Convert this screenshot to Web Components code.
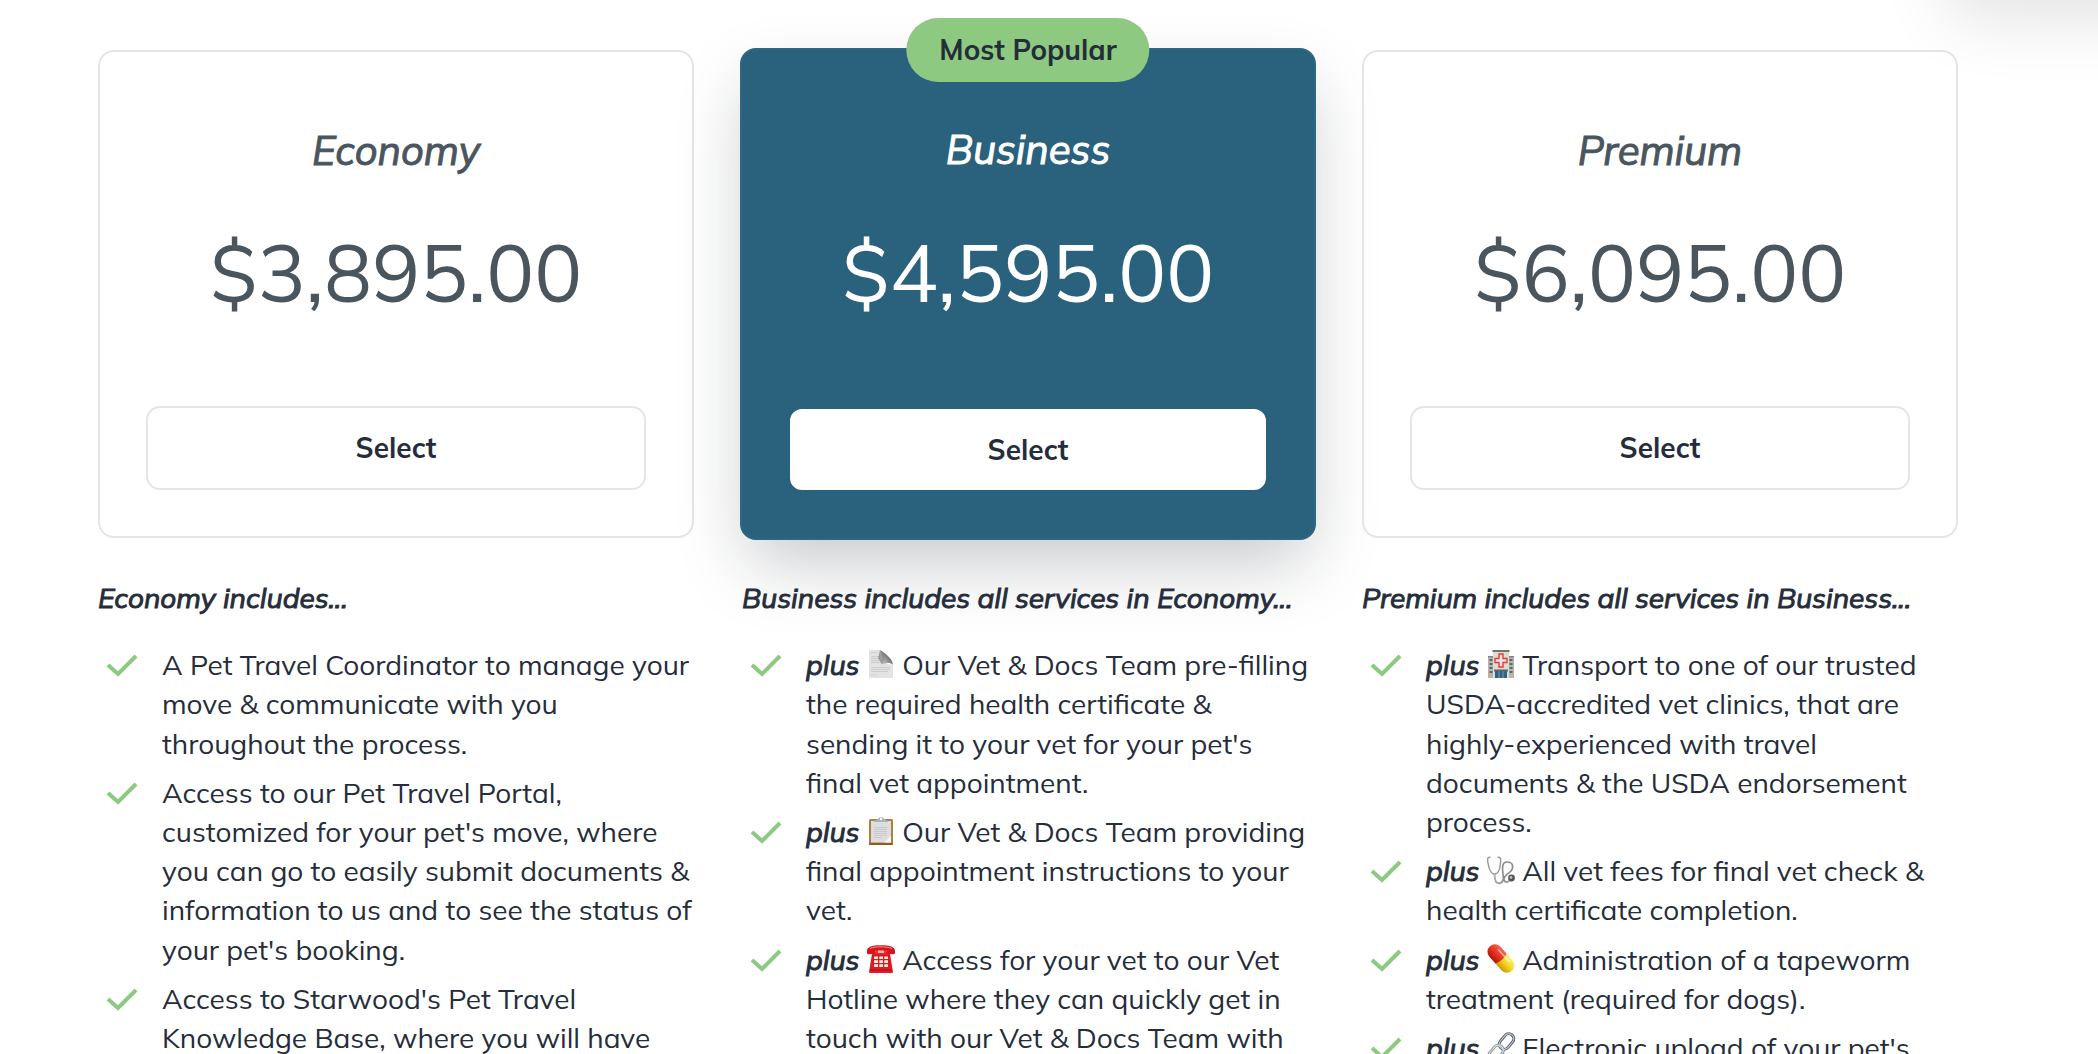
<!DOCTYPE html>
<html lang="en">
<head>
<meta charset="utf-8">
<title>Pet travel plans</title>
<style>
  html { overflow: hidden; }
  body { margin: 0; height: 100vh; overflow: hidden; background: #fff; color: #252d3b; font: 28px/1.4 Mulish, Lato, sans-serif; }
</style>
</head>
<body>
<plan-table>
  <plan-column name="Economy" price="$3,895.00">
    <span slot="lead">Economy includes...</span>
    <plan-feature>A Pet Travel Coordinator to manage your move &amp; communicate with you throughout the process.</plan-feature>
    <plan-feature>Access to our Pet Travel Portal, customized for your pet's move, where you can go to easily submit documents &amp; information to us and to see the status of your pet's booking.</plan-feature>
    <plan-feature>Access to Starwood's Pet Travel Knowledge Base, where you will have</plan-feature>
  </plan-column>
  <plan-column name="Business" price="$4,595.00" badge="Most Popular" featured>
    <span slot="lead">Business includes all services in Economy...</span>
    <plan-feature plus icon="page">Our Vet &amp; Docs Team pre-filling the required health certificate &amp; sending it to your vet for your pet's final vet appointment.</plan-feature>
    <plan-feature plus icon="clipboard">Our Vet &amp; Docs Team providing final appointment instructions to your vet.</plan-feature>
    <plan-feature plus icon="phone">Access for your vet to our Vet Hotline where they can quickly get in touch with our Vet &amp; Docs Team with</plan-feature>
  </plan-column>
  <plan-column name="Premium" price="$6,095.00">
    <span slot="lead">Premium includes all services in Business...</span>
    <plan-feature plus icon="hospital">Transport to one of our trusted USDA-accredited vet clinics, that are highly-experienced with travel documents &amp; the USDA endorsement process.</plan-feature>
    <plan-feature plus icon="stethoscope">All vet fees for final vet check &amp; health certificate completion.</plan-feature>
    <plan-feature plus icon="pill">Administration of a tapeworm treatment (required for dogs).</plan-feature>
    <plan-feature plus icon="link">Electronic upload of your pet's</plan-feature>
  </plan-column>
</plan-table>
<corner-panel></corner-panel>
<script>
const ICONS = {
  page: `<defs><linearGradient id="g" x1="0" y1="1" x2="1" y2="0"><stop offset="0" stop-color="#ddd"/><stop offset=".4" stop-color="#999"/><stop offset="1" stop-color="#222"/></linearGradient></defs>
    <path d="M2 0H14C16 4 17 9 18 13L26 15V28H2Z" fill="#e3e3e3"/>
    <path d="M4 2.500H10M4 6.500H13M4 8.500H13M4 10.500H14M4 12.500H14M4 17.500H23M4 19.500H23M4 21.500H21M4 25H10" stroke="#cdcdcd" stroke-width="1"/>
    <path d="M13 0C18 3 26 9 26 15C23 12 19 13 15 14.500C17 9 16 4 13 0Z" fill="url(#g)"/><path d="M13 0C17 4 18 9 15 14.500L11 8Z" fill="#666" opacity=".55"/>`,
  clipboard: `<rect x="2" y="2" width="24" height="26" rx="1.500" fill="#b07f3c"/><rect x="2" y="26" width="24" height="2" rx="1" fill="#8a5c28"/><rect x="4" y="4" width="20" height="21.500" fill="#dedede"/><path d="M17 25.500L24 19V25.500Z" fill="#f6f6f6"/>
    <path d="M7 10.500H20M7 12.500H20M7 14.500H20M7 16.500H20M7 18.500H20M7 20.500H15" stroke="#cacacd" stroke-width="1"/><path d="M7 5C7 3 10 3 11 2C11.500 -.5 16.500 -.5 17 2C18 3 21 3 21 5Z" fill="#a9b4c0"/><circle cx="14" cy="2" r="1.200" fill="#fff"/>`,
  phone: `<defs><linearGradient id="g" x1="0" y1="0" x2="0" y2="1"><stop offset="0" stop-color="#f0524c"/><stop offset=".3" stop-color="#d8141a"/><stop offset="1" stop-color="#e32024"/></linearGradient></defs>
    <path d="M9 6V3.500H19V6L23 9L26 27C26 28 25 28 24 28H4C3 28 2 28 2 27L5 9Z" fill="url(#g)"/><path d="M0 6C0 2 5 .3 14 .3S28 2 28 6V8C28 9 27 9.500 25 9.300L21 8.800C19.500 8.500 19.500 7 19.500 5.800H8.500C8.500 7 8.500 8.500 7 8.800L3 9.300C1 9.500 0 9 0 8Z" fill="#d5151b"/><path d="M3 3.500C8 1.200 20 1.200 25 3.500" stroke="#fa8f88" stroke-width="1" fill="none"/><path d="M11 5.500H17V8H11Z" fill="#f7b9b5"/><path d="M3 25H25" stroke="#a50a10" stroke-width="1"/>
    <path d="M7 11.500H11V14H7ZM12.300 11.500H16V14H12.300ZM17.300 11.500H21V14H17.300ZM7 15.300H11V18H7ZM12.300 15.300H16V18H12.300ZM17.300 15.300H21V18H17.300ZM7 19.300H11V22H7ZM12.300 19.300H16V22H12.300ZM17.300 19.300H21V22H17.300Z" fill="#fff4ee"/>`,
  hospital: `<path d="M1 6H7V28H1ZM21 6H27V28H21Z" fill="#b9b5a9"/><path d="M1 6H7V7.500H1ZM21 6H27V7.500H21Z" fill="#85857f"/><path d="M6 1H22V28H6Z" fill="#dedbd0"/><path d="M5.500 0H22.500V2H5.500Z" fill="#77756e"/>
    <path d="M2.500 10H5.500M2.500 14H5.500M2.500 18H5.500M2.500 22H5.500M22.500 10H25.500M22.500 14H25.500M22.500 18H25.500M22.500 22H25.500" stroke="#4f6b7d" stroke-width="2"/>
    <path d="M12 4H16V8.500H20V12.500H16V17H12V12.500H8V8.500H12Z" fill="#f4e6e0" stroke="#e33a40" stroke-width="1.400"/><path d="M8 20H20V28H8Z" fill="#2f6285"/><path d="M7 19.500H21V21.500H7Z" fill="#5b666b"/><path d="M12 21.500V28M16 21.500V28" stroke="#8aa9bb" stroke-width=".8"/>`,
  stethoscope: `<g fill="none" stroke-linecap="round"><path d="M3 1.200C0 1 .3 4 1 7C2 13 4 18 7.500 18S13 13 13.500 7C14 3 14 1 11 1.200" stroke="#9a9a9a" stroke-width="1.500"/><path d="M7.500 18C7.500 24 9 27.300 12 27.300C16 27.300 17 23 16 18C15 12 15 6 20 6C26 6 27 11 24 15C21 18 16 20 17 24C17.500 26 20 27 22 25" stroke="#8d8d8d" stroke-width="1.700"/><path d="M7.500 18C7.500 24 9 27 12 27" stroke="#d6d6d6" stroke-width=".6"/></g><circle cx="24.500" cy="22" r="3.400" fill="#555"/><circle cx="24" cy="21.500" r="1.400" fill="#bbb"/>`,
  pill: `<defs><linearGradient id="g" x1="0" y1="1" x2="0" y2="0"><stop offset="0" stop-color="#b3120a"/><stop offset=".5" stop-color="#ea3323"/><stop offset="1" stop-color="#f26a55"/></linearGradient><linearGradient id="h" x1="0" y1="1" x2="0" y2="0"><stop offset="0" stop-color="#c79a06"/><stop offset=".5" stop-color="#f3d51f"/><stop offset="1" stop-color="#fbf08a"/></linearGradient></defs>
    <g transform="translate(14 13.500) rotate(48)"><path d="M0 -7.500H9A7.500 7.500 0 0 1 9 7.500H0Z" fill="url(#h)"/><path d="M0 -7.500H-9A7.500 7.500 0 0 0 -9 7.500H0C2 3 2 -3 0 -7.500Z" fill="url(#g)"/><path d="M-8 -4H8" stroke="#fff" stroke-width="1.500" stroke-linecap="round" opacity=".5"/></g>`,
  link: `<g fill="none"><rect x="-8.500" y="-5" width="17" height="10" rx="5" transform="translate(19.500 8.500) rotate(-50)" stroke="#5b626c" stroke-width="3"/><rect x="-8.500" y="-5" width="17" height="10" rx="5" transform="translate(9 20) rotate(-50)" stroke="#8f98a3" stroke-width="3"/><rect x="-8.500" y="-5" width="17" height="10" rx="5" transform="translate(9 20) rotate(-50)" stroke="#dfe6ec" stroke-width="1"/><rect x="-8.500" y="-5" width="17" height="10" rx="5" transform="translate(19.500 8.500) rotate(-50)" stroke="#c9d0d8" stroke-width="1"/></g>`
};

customElements.define('plan-table', class extends HTMLElement {
  constructor() {
    super();
    this.attachShadow({ mode: 'open' }).innerHTML = `
      <style>
        :host { display: block; }
        main { display: grid; grid-template-columns: 596fr 572fr 596fr; gap: 48px; padding: 50px 140px 0 98px; }
      </style>
      <main><slot></slot></main>`;
  }
});

customElements.define('plan-card', class extends HTMLElement {
  constructor() {
    super();
    this.attachShadow({ mode: 'open' }).innerHTML = `
      <style>
        :host { display: flow-root; }
        article { position: relative; display: flex; flex-direction: column; box-sizing: border-box; min-height: 488px; padding: 70px 46px 46px; border: 2px solid #e0e6ea; border-radius: 16px; text-align: center; color: #4a555e; }
        h2 { margin: 0; font-size: 40px; font-style: italic; font-weight: 400; -webkit-text-stroke: 1px; }
        p { margin: 38px 0 0; font-size: 80px; }
        button { margin-top: auto; height: 84px; border: 2px solid #e0e6ea; border-radius: 14px; background: #fff; color: #252d3b; font: inherit; font-weight: 700; }
        .badge { position: absolute; top: -32px; left: 50%; translate: -50% 0; padding: 12px 33px 13px; border-radius: 33px; background: #8dc981; color: #252d3b; font-weight: 700; white-space: nowrap; }
        :host([featured]) article { min-height: 492px; margin: -2px; padding-top: 71px; border-color: #2f6680; background: #2a627d; color: #fff; box-shadow: 0 30px 70px -10px rgba(20, 28, 40, .25); }
        :host([featured]) p { margin-top: 39px; }
        :host([featured]) button { height: 85px; border-color: #2a627d; }
      </style>
      <article>
        <h2></h2>
        <p></p>
        <button type="button">Select</button>
      </article>`;
  }
  static observedAttributes = ['name', 'price', 'badge'];
  attributeChangedCallback(key, before, value) {
    if (key === 'name') this.shadowRoot.querySelector('h2').textContent = value;
    if (key === 'price') this.shadowRoot.querySelector('p').textContent = value;
    if (key === 'badge') {
      const badge = document.createElement('span');
      badge.className = 'badge';
      badge.textContent = value;
      this.shadowRoot.querySelector('article').prepend(badge);
    }
  }
});

customElements.define('plan-column', class extends HTMLElement {
  constructor() {
    super();
    this.attachShadow({ mode: 'open' }).innerHTML = `
      <style>
        :host { display: block; min-width: 0; }
        h3 { position: relative; margin: 40px 0 28px; font-size: 28px; font-style: italic; font-weight: 400; -webkit-text-stroke: 1px; white-space: nowrap; }
        .features { position: relative; display: flex; flex-direction: column; gap: 10px; }
      </style>
      <plan-card></plan-card>
      <h3><slot name="lead"></slot></h3>
      <div class="features" role="list"><slot></slot></div>`;
  }
  connectedCallback() {
    const card = this.shadowRoot.querySelector('plan-card');
    for (const key of ['name', 'price', 'badge', 'featured'])
      if (this.hasAttribute(key)) card.setAttribute(key, this.getAttribute(key));
  }
});

customElements.define('plan-feature', class extends HTMLElement {
  connectedCallback() {
    if (this.shadowRoot) return;
    this.setAttribute('role', 'listitem');
    const plus = this.hasAttribute('plus')
      ? `<b>plus</b> <svg class="icon" viewBox="0 0 28 28" aria-hidden="true">${ICONS[this.getAttribute('icon')]}</svg> ` : '';
    this.attachShadow({ mode: 'open' }).innerHTML = `
      <style>
        :host { display: flex; gap: 24px; }
        .check { flex: none; width: 32px; height: 24px; margin: 9px 0 0 8px; }
        .text { flex: 1; min-width: 0; }
        b { font-style: italic; font-weight: 400; -webkit-text-stroke: 1px; }
        .icon { width: 28px; height: 28px; vertical-align: -3px; overflow: visible; }
      </style>
      <svg class="check" viewBox="0 0 32 24" aria-hidden="true"><path d="M2 11L12 20L30 2" fill="none" stroke="#8dc981" stroke-width="4"/></svg>
      <div class="text">${plus}<slot></slot></div>`;
  }
});

customElements.define('corner-panel', class extends HTMLElement {
  constructor() {
    super();
    this.attachShadow({ mode: 'open' }).innerHTML = `
      <style>
        :host { position: absolute; top: -120px; right: -120px; width: 270px; height: 116px; border-radius: 16px; background: #fff; box-shadow: 0 20px 70px rgba(0, 0, 0, .12); }
      </style>`;
  }
});
</script>
</body>
</html>
